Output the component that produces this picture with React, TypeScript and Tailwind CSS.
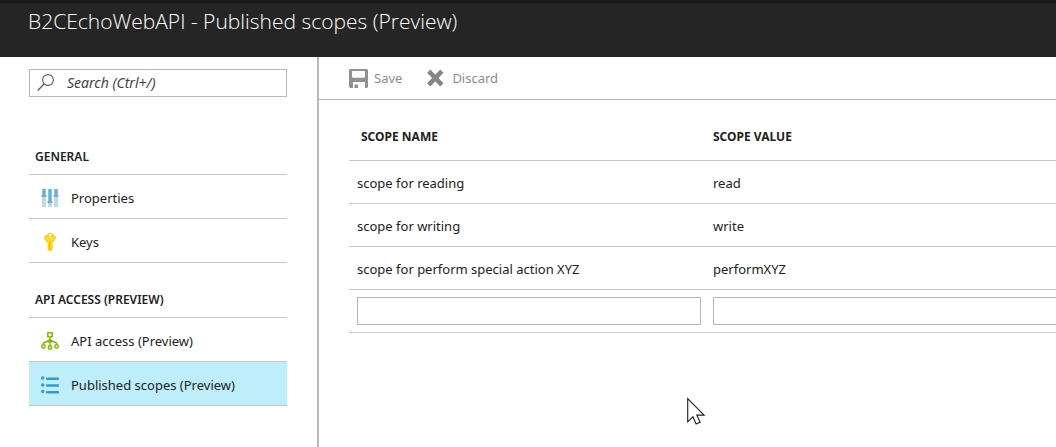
import type { ReactNode } from "react";

function SearchIcon() {
  return (
    <svg width="18" height="18" viewBox="0 0 18 18" fill="none" stroke="#5a5a5a" aria-hidden="true">
      <circle cx="11" cy="6" r="5.400" strokeWidth="1.100" />
      <path d="M7.200 9.800 0.800 16.500" strokeWidth="1.300" />
    </svg>
  );
}

function PropertiesIcon() {
  return (
    <svg width="18" height="18" viewBox="0 0 18 18" aria-hidden="true">
      <path fill="#b8dcec" d="M1 0h4v18H1zM7 0h4v18H7zM13 0h4v18h-4z" />
      <path fill="#59b4d9" d="M1.500 0h3v6h-3zM7.500 0h3v12h-3zM13.500 0h3v6h-3z" />
      <path fill="#a0a1a2" d="M.5 6h5v2h-5zM6.500 12h5v2h-5zM12.500 6h5v2h-5z" />
    </svg>
  );
}

function KeyIcon() {
  return (
    <svg width="18" height="18" viewBox="0 0 18 18" aria-hidden="true">
      <path
        fill="#fcd116"
        fillRule="evenodd"
        d="M9 0c1.200 0 1.900.6 2.500 1.200l2.400 1.600c.7.600.9 1.100.9 2 0 2.200-1.300 3.900-3.200 4.500v7.200L9.800 18H8.200l-1.700-1.500V9.300C4.600 8.700 3.200 7 3.200 4.800c0-.9.2-1.400.9-2l2.400-1.600C7.100.6 7.800 0 9 0Zm0 1a1.200 1.200 0 1 0 0 2.400A1.200 1.200 0 0 0 9 1Z"
      />
      <path fill="#ffec8a" d="M5 4.500h8v.8H5zM5.500 6.400h7v.8h-7z" />
      <path fill="#e5b800" d="M8 10h.9v7H8z" />
    </svg>
  );
}

function ApiIcon() {
  return (
    <svg width="18" height="18" viewBox="0 0 18 18" fill="none" stroke="#7fba00" strokeWidth="1.500" aria-hidden="true">
      <rect x="6.800" y=".8" width="4.400" height="3.800" />
      <path d="M9 4.600v9M2.500 12.800V11L5 9.700h8l2.500 1.300v1.800M6 9.700 9 7.500l3 2.200" />
      <circle cx="2.500" cy="14.500" r="1.700" />
      <circle cx="9" cy="15.500" r="1.700" />
      <circle cx="15.500" cy="14.500" r="1.700" />
    </svg>
  );
}

function ListIcon() {
  return (
    <svg width="18" height="18" viewBox="0 0 18 18" fill="#3999c6" aria-hidden="true">
      <circle cx="1.700" cy="2" r="1.700" />
      <circle cx="1.700" cy="9" r="1.700" />
      <circle cx="1.700" cy="15.500" r="1.700" />
      <rect x="5" y="1.500" width="13" height="2.500" rx="1" />
      <rect x="5" y="8.300" width="13" height="2.500" rx="1" />
      <rect x="5" y="15" width="13" height="2.500" rx="1" />
    </svg>
  );
}

function SaveIcon() {
  return (
    <svg width="19" height="19" viewBox="0 0 19 19" aria-hidden="true">
      <path
        fill="#919191"
        fillRule="evenodd"
        d="M1 0h17l1 1v17l-1 1h-2v-6H4v6H1.200L0 17.800V1ZM3 2.500V8l.8.800h11.400L16 8V2.500l-.5-.5h-12Z"
      />
      <path fill="#919191" d="M5.500 15.500h3.500V19H5.500z" />
    </svg>
  );
}

function DiscardIcon() {
  return (
    <svg width="18" height="18" viewBox="0 0 18 18" aria-hidden="true">
      <path d="m2.700 2.200 13.200 13.600M15.900 2.200 2.700 15.800" stroke="#868686" strokeWidth="4.600" />
    </svg>
  );
}

function MenuSection({ title, children }: { title: string; children: ReactNode }) {
  return (
    <section>
      <h2 className="flex h-9 items-center border-b border-[#c8c8c8] pl-1.5 text-xs font-semibold">{title}</h2>
      <ul>{children}</ul>
    </section>
  );
}

function MenuItem({ icon, label, active = false }: { icon: ReactNode; label: string; active?: boolean }) {
  return (
    <li>
      <a
        href="#"
        aria-current={active ? "page" : undefined}
        className={
          active
            ? "flex h-11 items-center gap-3 border-b border-[#c8c8c8] bg-[#bdeefa] pt-0.5 pl-3"
            : "flex h-11 items-center gap-3 border-b border-[#c8c8c8] pt-0.5 pl-3"
        }
      >
        {icon}
        {label}
      </a>
    </li>
  );
}

const scopes = [
  { name: "scope for reading", value: "read" },
  { name: "scope for writing", value: "write" },
  { name: "scope for perform special action XYZ", value: "performXYZ" },
];

export default function App() {
  return (
    <div className="relative flex min-h-screen flex-col overflow-hidden bg-white font-['Noto_Sans',sans-serif] text-[13px] leading-5 text-[#222]">
      <header className="h-[57px] border-t-[3px] border-[#1b1b1b] bg-[#252525] px-7 pt-0.5">
        <h1 className="font-['Open_Sans',sans-serif] text-[21px] leading-8 font-light text-white">
          B2CEchoWebAPI - Published scopes (Preview)
        </h1>
      </header>

      <div className="flex grow">
        <nav className="flex w-[319px] shrink-0 flex-col border-r-2 border-[#b8b8b8] pt-3 pr-[30px] pl-[29px]">
          <label className="flex h-7 items-center gap-3 border border-[#b8b8b8] pl-[7px]">
            <SearchIcon />
            <input
              type="search"
              aria-label="Search"
              placeholder="Search (Ctrl+/)"
              className="min-w-0 grow bg-transparent text-sm italic outline-none placeholder:text-[#444]"
            />
          </label>
          <div className="mt-[42px] flex flex-col gap-[19px]">
            <MenuSection title="GENERAL">
              <MenuItem icon={<PropertiesIcon />} label="Properties" />
              <MenuItem icon={<KeyIcon />} label="Keys" />
            </MenuSection>
            <MenuSection title="API ACCESS (PREVIEW)">
              <MenuItem icon={<ApiIcon />} label="API access (Preview)" />
              <MenuItem icon={<ListIcon />} label="Published scopes (Preview)" active />
            </MenuSection>
          </div>
        </nav>

        <main className="min-w-0 grow">
          <div className="flex h-[43px] items-center gap-6 border-b border-[#b8b8b8] pl-[30px] text-[#8c8c8c]">
            <button type="button" className="flex items-center gap-1.5">
              <SaveIcon />
              Save
            </button>
            <button type="button" className="flex items-center gap-2">
              <DiscardIcon />
              Discard
            </button>
          </div>

          <div className="pt-3 pl-[30px]">
            <table className="w-full table-fixed border-collapse text-left">
              <thead>
                <tr className="h-12 border-b border-[#c8c8c8] text-xs">
                  <th scope="col" className="w-[358px] pt-0.5 pl-3 font-bold">
                    SCOPE NAME
                  </th>
                  <th scope="col" className="pt-0.5 pl-1.5 font-bold">
                    SCOPE VALUE
                  </th>
                </tr>
              </thead>
              <tbody>
                {scopes.map((scope) => (
                  <tr key={scope.value} className="h-[43px] border-b border-[#c8c8c8]">
                    <td className="pt-0.5 pl-2">{scope.name}</td>
                    <td className="pt-0.5 pl-1.5">{scope.value}</td>
                  </tr>
                ))}
                <tr className="h-[43px] border-b border-[#c8c8c8]">
                  <td className="pr-1.5 pl-2">
                    <input
                      type="text"
                      aria-label="Scope name"
                      className="block h-7 w-full border border-[#b8b8b8] px-2 outline-none"
                    />
                  </td>
                  <td className="pl-1.5">
                    <input
                      type="text"
                      aria-label="Scope value"
                      className="block h-7 w-full border border-r-0 border-[#b8b8b8] px-2 outline-none"
                    />
                  </td>
                </tr>
              </tbody>
            </table>
          </div>
        </main>
      </div>

      <svg
        className="pointer-events-none absolute top-[397px] left-[687px]"
        width="19"
        height="29"
        viewBox="0 0 19 29"
        aria-hidden="true"
      >
        <path
          d="M.7 1.500v23.300l5.200-5 3.200 7.200 4-1.800-3.300-7.100h7.300Z"
          fill="#fff"
          stroke="#1c1c28"
          strokeWidth="1.100"
        />
      </svg>
    </div>
  );
}
